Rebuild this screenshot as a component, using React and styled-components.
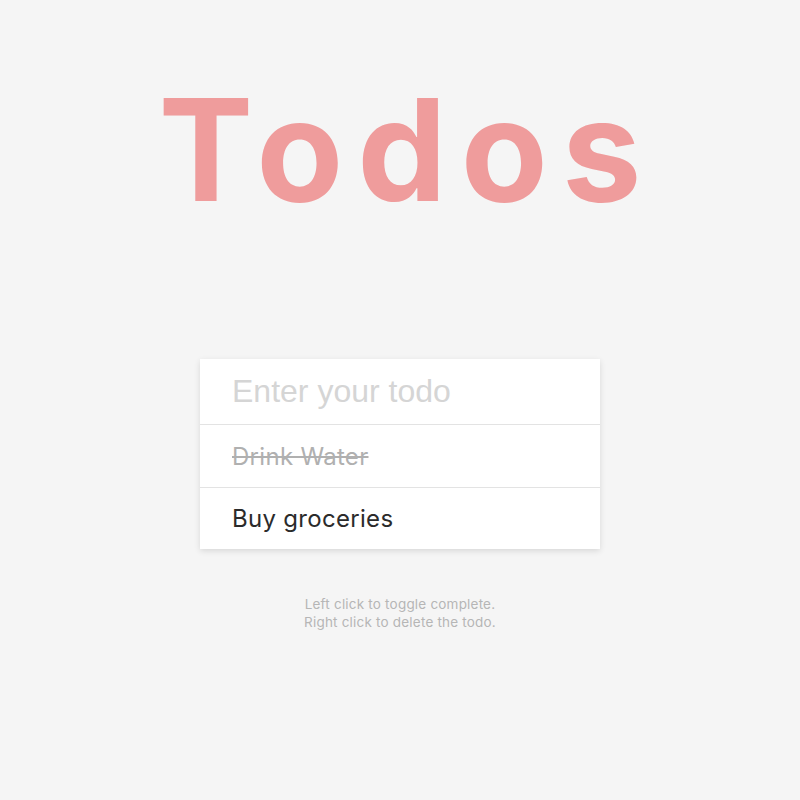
import React from "react";
import styled, { createGlobalStyle } from "styled-components";

const GlobalStyle = createGlobalStyle`
  html, body {
    margin: 0;
    padding: 0;
    background: #f5f5f5;
  }
  * { box-sizing: border-box; }
`;

const Page = styled.main`
  min-height: 800px;
  display: flex;
  flex-direction: column;
  align-items: center;
  font-family: Inter, "Open Sans", sans-serif;
`;

const Title = styled.h1`
  margin: 79px 0 0;
  padding-left: 14px;
  font-family: Inter, sans-serif;
  font-size: 142px;
  line-height: 141px;
  font-weight: 700;
  letter-spacing: 14px;
  color: #ef9c9c;
`;

const Card = styled.form`
  margin-top: 139px;
  width: 400px;
  background: #fff;
  box-shadow: 0 2px 6px rgba(0, 0, 0, 0.12);
`;

const Input = styled.input`
  display: block;
  width: 100%;
  height: 65px;
  border: none;
  outline: none;
  padding: 0 32px;
  font-family: "Liberation Sans", Arial, sans-serif;
  font-size: 32px;
  color: #333;
  background: transparent;
  &::placeholder { color: #d5d5d5; }
`;

const List = styled.ul`
  list-style: none;
  margin: 0;
  padding: 0;
`;

const Item = styled.li`
  height: ${(p) => (p.$last ? 62 : 63)}px;
  border-top: 1px solid #e3e3e3;
  display: flex;
  align-items: center;
  padding: 0 32px;
  font-size: 24px;
  letter-spacing: 0.3px;
  font-weight: 400;
  color: ${(p) => (p.$done ? "#b0b0b0" : "#2b2b2b")};
  text-decoration: ${(p) => (p.$done ? "line-through" : "none")};
`;

const Hint = styled.small`
  display: block;
  margin-top: 46px;
  text-align: center;
  font-size: 13.5px;
  letter-spacing: 0.2px;
  line-height: 18px;
  color: #b6b6b6;
`;

export default function App() {
  return (
    <>
      <GlobalStyle />
      <Page>
        <Title>Todos</Title>
        <Card onSubmit={(e) => e.preventDefault()}>
          <Input placeholder="Enter your todo" />
          <List>
            <Item $done>Drink Water</Item>
            <Item $last>Buy groceries</Item>
          </List>
        </Card>
        <Hint>
          Left click to toggle complete.
          <br />
          Right click to delete the todo.
        </Hint>
      </Page>
    </>
  );
}
